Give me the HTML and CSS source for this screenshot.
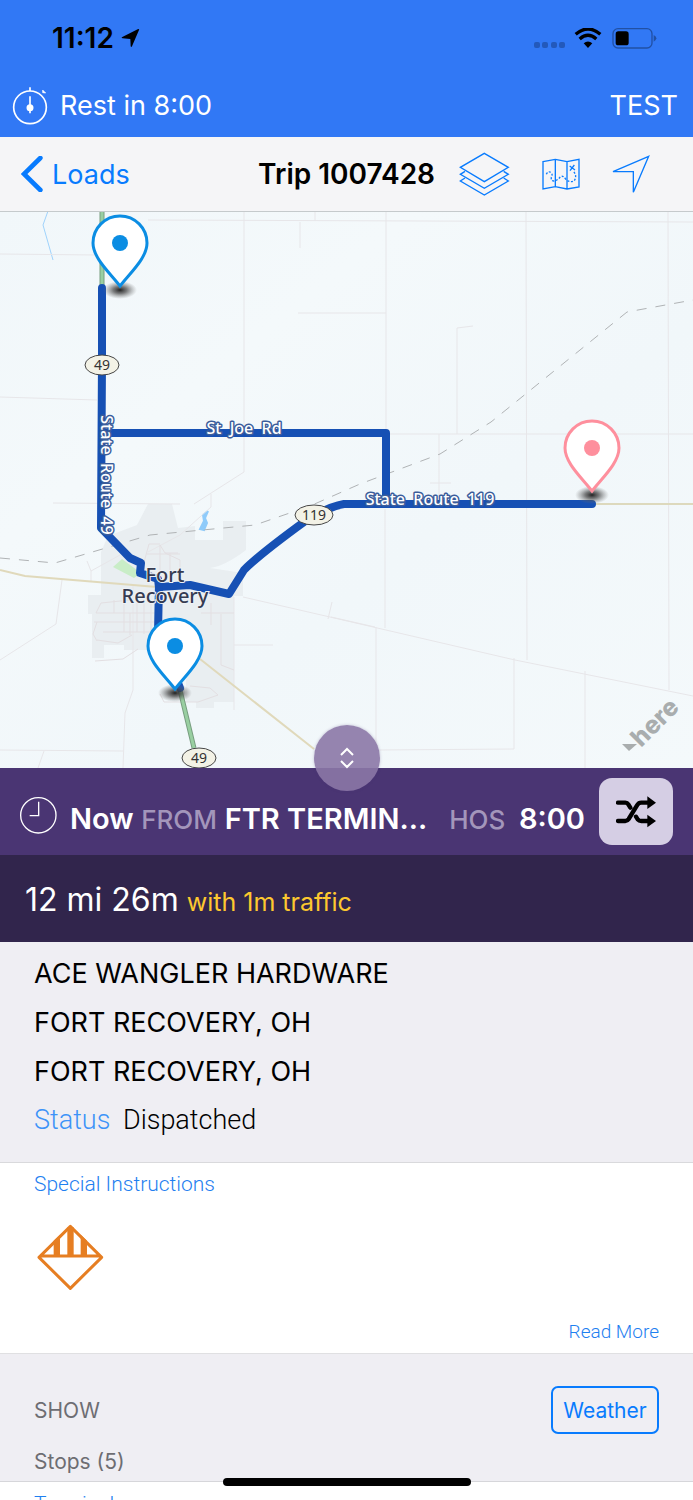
FILE: index.html
```html
<!DOCTYPE html>
<html lang="en">
<head>
  <meta charset="UTF-8">
  <meta name="viewport" content="width=device-width, initial-scale=1.0">
  <title>Trip 1007428</title>
  <link rel="stylesheet" href="styles.css">
</head>
<body>

<div class="app">
  <header class="top">
    <div class="status-bar">
      <span class="time">11:12</span>
      <svg class="location" width="19" height="19" viewBox="0 0 57 57" aria-hidden="true">
        <path d="M54 3 L33 52 Q30 57 29 51 L28 30 L5 28 Q-1 27 4 24 L50 1 Q56 -1 54 3Z"/>
      </svg>
      <div class="signals">
        <svg width="32" height="7" viewBox="0 0 32 7" aria-hidden="true" fill="#2359bb">
          <rect x="1" y="0" width="6" height="6" rx="2"/>
          <rect x="9" y="0" width="6" height="6" rx="2"/>
          <rect x="18" y="0" width="6" height="6" rx="2"/>
          <rect x="26" y="0" width="6" height="6" rx="2"/>
        </svg>
        <svg class="wifi" width="28" height="20" viewBox="0 0 84 60" aria-hidden="true">
          <path d="M5 19 Q42 -13 79 19" fill="none" stroke="#000" stroke-width="10"/>
          <path d="M17 33 Q42 11 67 33" fill="none" stroke="#000" stroke-width="10"/>
          <path d="M29 46 Q42 35 55 46 L42 60Z"/>
        </svg>
        <svg class="battery" width="45" height="21" viewBox="0 0 135 63" aria-hidden="true">
          <rect x="3" y="2" width="117" height="58" rx="15" fill="none" stroke="#2150a4" stroke-width="4"/>
          <rect x="11" y="10" width="39" height="42" rx="8"/>
          <path d="M125 21 Q133 25 133 31 Q133 37 125 41Z" fill="#2150a4"/>
        </svg>
      </div>
    </div>
    <div class="rest-bar">
      <svg width="36" height="38" viewBox="0 0 108 114" aria-hidden="true" fill="none" stroke="#fff" stroke-width="5">
        <circle cx="54" cy="61" r="49"/>
        <path d="M54 1 V12 M54 28 V79"/>
        <circle cx="54" cy="62" r="8" fill="#fff"/>
        <path d="M92 9 L101 18 L92 17Z" fill="#fff" stroke-width="2"/>
      </svg>
      <span>Rest in 8:00</span>
      <span class="user">TEST</span>
    </div>
  </header>

  <nav class="nav-bar">
    <a class="back" href="#loads">
      <svg width="22" height="36" viewBox="0 0 66 108" aria-hidden="true">
        <path d="M58 6 L9 54 L58 102" fill="none" stroke="#087bfe" stroke-width="14" stroke-linecap="round"/>
      </svg>
      Loads
    </a>
    <h1>Trip 1007428</h1>
    <div class="nav-actions">
      <button type="button" aria-label="Layers">
        <svg width="51" height="45" viewBox="334 456 153 135">
          <path d="M410 460 L482 502 L410 545 L338 502Z"/>
          <path d="M352 514 L338 523 L410 565 L482 523 L468 514"/>
          <path d="M352 534 L338 543 L410 585 L482 543 L468 534"/>
        </svg>
      </button>
      <button type="button" aria-label="Route map">
        <svg width="38" height="32" viewBox="584 474 114 96">
          <path d="M587 485 L624 478 L659 485 L695 478 V561 L659 567 L624 560 L587 567Z M624 478 V560 M659 485 V567"/>
          <path d="M597 523 Q601 512 611 517 Q617 523 612 532 Q610 543 620 543 Q633 540 639 530 Q648 525 656 539 Q668 548 680 543 Q687 534 684 522 L678 513" stroke-dasharray="6 5"/>
          <path d="M667 498 L683 510 M681 495 L668 512"/>
        </svg>
      </button>
      <button type="button" aria-label="Navigate">
        <svg width="38" height="38" viewBox="795 465 114 114">
          <path d="M905 469 L798 515 L859 515 L859 577Z"/>
        </svg>
      </button>
    </div>
  </nav>

  <main>
    <section class="map">
      <svg class="map-canvas" viewBox="0 212 693 556" role="img" aria-label="Route map around Fort Recovery">
        <defs>
          <radialGradient id="shadow">
            <stop offset="0" stop-color="#222"/>
            <stop offset="0.4" stop-color="#444" stop-opacity="0.7"/>
            <stop offset="1" stop-color="#777" stop-opacity="0"/>
          </radialGradient>
          <linearGradient id="land" x1="0" y1="0" x2="1" y2="1">
            <stop offset="0" stop-color="#f1f7fa"/>
            <stop offset="0.3" stop-color="#f4f9fb"/>
            <stop offset="0.6" stop-color="#f1f7fa"/>
            <stop offset="1" stop-color="#f4f9fb"/>
          </linearGradient>
          <g id="pin">
            <ellipse cx="0" cy="2" rx="17" ry="9" fill="url(#shadow)"/>
            <path d="M0 -2 C-10 -15 -27 -30 -27 -45 A27 27 0 0 1 27 -45 C27 -30 10 -15 0 -2Z" fill="#fff" stroke="currentColor" stroke-width="3"/>
            <circle cx="0" cy="-45" r="8" fill="currentColor"/>
          </g>
        </defs>

        <rect x="0" y="211" width="693" height="557" fill="url(#land)"/>

        <!-- town area -->
        <path class="town" d="M148 504 H172 L178 528 L195 526 V540 H223 V521 H246 V550 Q225 566 210 568 L243 573 V596 H234 V702 H214 V708 H196 V702 H186 V668 L150 650 H124 V645 H104 V658 H92 V614 H88 V595 H101 V552 L108 536 L137 525Z"/>
        <path d="M113 567 L122 559 L141 573 L134 578Z" fill="#c9edc7"/>
        <path d="M208 511 L203 515 L204 521 L200 529 L204 530 L207 523 L205 518Z" fill="#8fcbfa" stroke="#8fcbfa" stroke-width="2"/>
        <path d="M48 211 L43 225 L53 260" fill="none" stroke="#9fd2fb" stroke-width="1"/>

        <!-- minor roads -->
        <g class="minor">
          <path d="M0 254 L96 255 M148 220 L693 222 M244 211 V472 L194 504 M315 211 V221 M300 222 V248 M298 313 H386 M386 211 V430 M526 211 L527 660 M668 211 L669 690 M457 434 V328 L473 326 M439 434 V497 M385 434 H693 M430 483 H451"/>
          <path d="M0 397 L97 400 M53 503 L180 504 M211 494 V507 L180 535 L148 552 M243 597 L330 617 L515 660 L693 696 M331 617 L375 627 M385 509 V628 M376 627 V750 L514 749 V658 M585 671 V768 M328 619 L332 602"/>
          <path d="M62 580 L56 624 L0 660 M0 750 L123 751 M44 751 L38 768 M133 585 V690 L125 713 L123 768 M234 597 V710 M234 645 H273 M87 561 L91 571 L91 581 M91 571 L120 555"/>
        </g>
        <g class="streets">
          <path d="M96 613 H158 M94 622 H158 M103 632 H158 M97 640 L118 643 L132 635 M130 613 V635 M137 600 V632 M144 600 V634 M151 600 V634 M124 600 V632 M114 600 V613 M96 613 L101 603 L130 600 M97 622 L93 634 L97 641 M95 661 L123 659 L138 649 M180 577 V560 L165 553 M160 575 V545 L165 553 H178 M143 566 L149 544 H160 M147 554 H180 M170 577 V553 M201 613 H234 M211 603 V625 M221 614 V665 L234 670 M160 694 L164 702 L198 702 L218 695 L210 688 L190 686"/>
        </g>

        <!-- highways and railroad -->
        <path d="M0 570 L25 576 L157 587 M200 659 L314 749" fill="none" stroke="#e0d9bb" stroke-width="2"/>
        <path d="M590 504 H693" stroke="#ddd9bd" stroke-width="2"/>
        <path class="rail" d="M0 558 L55 563 L150 535 L255 525 L310 506 L360 484 L440 454 L491 422 L627 312 L693 300"/>
        <path d="M102 211 V290 M180 690 L194 748" fill="none" stroke="#789e80" stroke-width="5"/>
        <path d="M102 211 V290 M180 690 L194 748" fill="none" stroke="#99cfa1" stroke-width="3"/>

        <!-- route -->
        <g class="route">
          <path d="M102 288 V360 L101 528 L130 558 L141 563 L140 573 L158 579 L159 587 L190 585 L229 594 L244 570 Q260 554 304 522 Q327 507 344 504 H592"/>
          <path d="M102 433 H386 V502"/>
          <path d="M159 583 L158 633 L180 688"/>
        </g>

        <g class="shield">
          <ellipse cx="102" cy="365" rx="17" ry="10"/>
          <text x="102" y="370">49</text>
          <ellipse cx="314" cy="515" rx="19" ry="10"/>
          <text x="314" y="520">119</text>
          <ellipse cx="199" cy="758" rx="17" ry="10"/>
          <text x="199" y="763">49</text>
        </g>

        <g class="road-name">
          <text x="244" y="434">St&#160; Joe&#160; Rd</text>
          <text x="430" y="505">State&#160; Route&#160; 119</text>
          <text x="475" y="-101" transform="rotate(90)">State&#160; Route&#160; 49</text>
        </g>
        <g class="town-name">
          <text x="165" y="582">Fort</text>
          <text x="165" y="603">Recovery</text>
        </g>

        <use href="#pin" x="120" y="288" color="#0b8de3"/>
        <use href="#pin" x="592" y="493" color="#fe8f9d"/>
        <use href="#pin" x="175" y="691" color="#0b8de3"/>

        <g class="provider">
          <text transform="translate(641 748) rotate(-45)">here</text>
          <path d="M622 744 H637 L629 751Z"/>
        </g>
      </svg>
      <button class="expand" type="button" aria-label="Resize map">
        <svg width="16" height="24" viewBox="0 0 16 24" fill="none" stroke="#fff" stroke-width="2">
          <path d="M2 9 L8 3 L14 9 M2 15 L8 21 L14 15"/>
        </svg>
      </button>
    </section>

    <section class="leg">
      <svg width="37" height="37" viewBox="0 0 111 111" aria-hidden="true" fill="none" stroke="#fff" stroke-width="4">
        <circle cx="55" cy="55" r="53"/>
        <path d="M56 14 V56 H29"/>
      </svg>
      <p class="leg-text">
        <strong>Now</strong>
        <span class="dim">FROM</span>
        <strong>FTR TERMIN...</strong>
      </p>
      <p class="hos">
        <span class="dim">HOS</span>
        <strong>8:00</strong>
      </p>
      <button class="shuffle" type="button" aria-label="Reroute">
        <svg width="40" height="32" viewBox="0 0 120 96">
          <path d="M6 20 H28 Q34 20 37 25 L43 35 M60 62 L65 70 Q69 75 76 75 H95 M6 75 H28 Q34 75 38 69 L64 27 Q68 20 76 20 H95" fill="none" stroke="#000" stroke-width="13" stroke-linecap="round"/>
          <path d="M94 1 L120 20 L94 39Z M94 56 L120 75 L94 94Z"/>
        </svg>
      </button>
    </section>

    <section class="distance">
      <span>12 mi 26m</span>
      <span class="traffic">with 1m traffic</span>
    </section>

    <section class="stop">
      <p>ACE WANGLER HARDWARE</p>
      <p>FORT RECOVERY, OH</p>
      <p>FORT RECOVERY, OH</p>
      <p class="state"><span class="label">Status</span> Dispatched</p>
    </section>

    <section class="instructions">
      <h2>Special Instructions</h2>
      <svg width="67" height="67" viewBox="0 0 201 201" aria-hidden="true">
        <path d="M100 7 L194 100 L100 193 L6 100Z M8 96 H192" fill="none" stroke="#e67e22" stroke-width="9" stroke-linejoin="round"/>
        <path d="M50 50 L69 32 V98 H50Z M91 10 H110 V98 H91Z M131 32 L150 50 V98 H131Z" fill="#e67e22"/>
      </svg>
      <a class="read-more" href="#instructions">Read More</a>
    </section>

    <section class="show">
      <div class="show-row">
        <span>SHOW</span>
        <button class="weather" type="button">Weather</button>
      </div>
      <h2>Stops (5)</h2>
    </section>

    <section class="stops">
      <a href="#terminal">Terminal</a>
    </section>
  </main>

  <div class="home-indicator"></div>
</div>

</body>
</html>
```
FILE: styles.css
```css
* {
  box-sizing: border-box;
}
body {
  margin: 0;
  font-family: Inter, "Liberation Sans", sans-serif;
  font-size: 27px;
  color: #000;
  background-color: #fff;
}
h1, h2, p {
  margin: 0;
  font-weight: 400;
}
a {
  text-decoration: none;
}
button {
  padding: 0;
  border: none;
  background: none;
  font-family: inherit;
  cursor: pointer;
}
svg {
  display: block;
  flex-shrink: 0;
}
.app {
  height: 100vh;
  overflow: hidden;
}

/* header */
.top {
  background-color: #3178f5;
}
.status-bar {
  display: flex;
  align-items: center;
  height: 74px;
  padding: 2px 36px 0 52px;
}
.time {
  font-size: 28px;
  font-weight: 600;
}
.location {
  margin-left: 7px;
}
.signals {
  display: flex;
  align-items: center;
  margin-left: auto;
}
.signals svg:first-child {
  margin-top: 14px;
}
.wifi {
  margin: 0 10px 0 9px;
}
.rest-bar {
  display: flex;
  align-items: center;
  gap: 12px;
  height: 63px;
  padding: 0 15px 0 12px;
  color: #fff;
}
.user {
  margin-left: auto;
}

/* navigation */
.nav-bar {
  display: flex;
  align-items: center;
  height: 75px;
  padding: 0 43px 0 21px;
  background-color: #f5f5f7;
  border-bottom: 1px solid #c5cacc;
}
.back {
  display: flex;
  align-items: center;
  gap: 9px;
  color: #087bfe;
}
.nav-bar h1 {
  margin-left: auto;
  font-size: 28px;
  font-weight: 600;
}
.nav-actions {
  display: flex;
  align-items: center;
  gap: 32px;
  margin-left: 24px;
}
.nav-actions svg {
  fill: none;
  stroke: #087bfe;
  stroke-width: 4;
}

/* map */
.map {
  position: relative;
}
.map-canvas {
  width: 100%;
  height: auto;
}
.town {
  fill: #e9eef1;
}
.minor {
  fill: none;
  stroke: #e7e6e9;
  stroke-width: 1;
}
.streets {
  fill: none;
  stroke: #e3dfe2;
  stroke-width: 1;
}
.rail {
  fill: none;
  stroke: #b0b3b5;
  stroke-width: 1;
  stroke-dasharray: 10 9;
}
.route {
  fill: none;
  stroke: #1650b4;
  stroke-width: 8;
  stroke-linecap: round;
  stroke-linejoin: round;
}
.shield ellipse {
  fill: #f3f2e6;
  stroke: #474747;
  stroke-width: 1;
}
.shield text {
  font-family: "Noto Sans", sans-serif;
  font-size: 14px;
  text-anchor: middle;
  fill: #333;
}
.road-name text {
  font-family: "Noto Sans", sans-serif;
  font-size: 16px;
  font-weight: 500;
  text-anchor: middle;
  fill: #fff;
  stroke: #3b5d9b;
  stroke-width: 3;
  stroke-linejoin: round;
  paint-order: stroke;
}
.town-name text {
  font-family: "Noto Sans", sans-serif;
  font-size: 20px;
  font-weight: 500;
  text-anchor: middle;
  fill: #363c52;
  stroke: #eef2f6;
  stroke-width: 2;
  paint-order: stroke;
}
.provider {
  font-size: 25px;
  font-weight: 800;
  fill: #a9adae;
}
.expand {
  position: absolute;
  left: 50%;
  bottom: -23px;
  display: flex;
  align-items: center;
  justify-content: center;
  width: 66px;
  height: 66px;
  margin-left: -33px;
  border-radius: 50%;
  background-color: rgba(139, 119, 166, 0.9);
  box-shadow: 0 0 3px rgba(74, 53, 115, 0.3);
}

/* current leg */
.leg {
  display: flex;
  align-items: center;
  height: 87px;
  padding: 0 20px;
  color: #fff;
  background-color: #4a3573;
}
.leg svg {
  margin-top: 7px;
}
.leg strong {
  font-size: 29px;
  font-weight: 600;
}
.leg-text, .hos {
  padding-top: 14px;
  white-space: nowrap;
}
.leg-text {
  margin-left: 13px;
}
.hos {
  margin-left: auto;
}
.hos strong {
  margin-left: 6px;
}
.dim {
  font-size: 26px;
  font-weight: 500;
  color: #a396bb;
}
.shuffle {
  display: flex;
  align-items: center;
  justify-content: center;
  width: 74px;
  height: 67px;
  margin-left: 14px;
  border-radius: 13px;
  background-color: #d5cee4;
}
.shuffle svg {
  margin: 0;
}
.distance {
  display: flex;
  align-items: baseline;
  gap: 8px;
  height: 87px;
  padding: 25px 25px 0;
  font-size: 32px;
  line-height: 40px;
  color: #fff;
  background-color: #31254c;
}
.traffic {
  font-size: 25px;
  color: #fdc82f;
}

/* stop details */
.stop {
  padding: 7px 34px 17px;
  line-height: 49px;
  background-color: #efeef3;
}
.state {
  font-family: Roboto, "Liberation Sans", sans-serif;
  font-size: 27px;
  font-weight: 300;
}
.label {
  margin-right: 6px;
  color: #3d93f8;
}
.instructions {
  display: flex;
  flex-direction: column;
  padding: 7px 34px 9px;
  border-top: 1px solid #d9d9dc;
  font-family: Roboto, "Liberation Sans", sans-serif;
  font-weight: 300;
}
.instructions h2 {
  font-size: 21px;
  font-weight: 300;
  line-height: 28px;
  color: #1f80f0;
}
.instructions svg {
  margin: 26px 0 29px 3px;
}
.read-more {
  align-self: flex-end;
  font-size: 19px;
  line-height: 24px;
  color: #1f80f0;
}
.show {
  padding: 32px 34px 0;
  border-top: 1px solid #e0e0e2;
  border-bottom: 1px solid #d6d6da;
  font-size: 21px;
  color: #6d6d72;
  background-color: #efeef3;
}
.show-row {
  display: flex;
  align-items: center;
  justify-content: space-between;
}
.weather {
  width: 108px;
  height: 48px;
  border: 2px solid #087bfe;
  border-radius: 7px;
  font-size: 21px;
  color: #087bfe;
}
.show h2 {
  margin-top: 9px;
  font-size: 21px;
  line-height: 38px;
}
.stops {
  padding: 8px 34px;
  font-family: Roboto, "Liberation Sans", sans-serif;
  font-size: 21px;
  font-weight: 300;
  line-height: 28px;
}
.stops a {
  color: #1f80f0;
}
.home-indicator {
  position: fixed;
  left: 50%;
  bottom: 14px;
  width: 248px;
  height: 8px;
  margin-left: -124px;
  border-radius: 4px;
  background-color: #000;
}
```
